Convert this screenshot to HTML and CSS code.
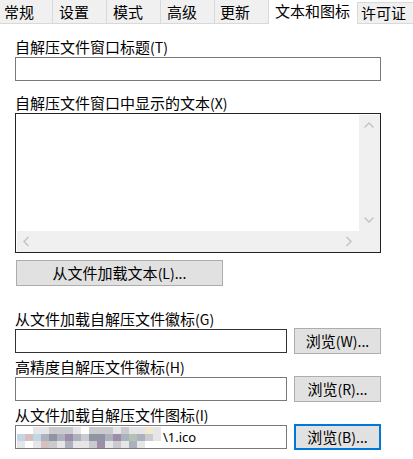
FILE: index.html
```html
<!DOCTYPE html>
<html lang="zh-CN">
<head>
<meta charset="utf-8">
<title>文本和图标</title>
<link rel="stylesheet" href="styles.css">
</head>
<body>
<div class="tabs">
  <div class="tab p4">常规</div>
  <div class="tab">设置</div>
  <div class="tab">模式</div>
  <div class="tab">高级</div>
  <div class="tab p5">更新</div>
  <div class="tab sel">文本和图标</div>
  <div class="tab last">许可证</div>
</div>
<div class="content">
  <div class="label first">自解压文件窗口标题<span class="key">(T)</span></div>
  <div class="input wide"></div>

  <div class="label l2">自解压文件窗口中显示的文本<span class="key">(X)</span></div>
  <div class="memo">
    <div class="memo-text"></div>
    <div class="vscroll">
      <svg width="21" height="116" viewBox="0 0 21 116"><polyline points="5.5,12.5 10,8 14.5,12.5" /><polyline points="5.5,102.5 10,107 14.5,102.5" /></svg>
    </div>
    <div class="hscroll">
      <svg width="342" height="21" viewBox="0 0 342 21"><polyline points="11.5,6 7,10.5 11.5,15" /><polyline points="329.5,6 334,10.5 329.5,15" /></svg>
    </div>
    <div class="corner"></div>
  </div>

  <button class="btn load">从文件加载文本<span class="key">(L)...</span></button>

  <div class="label lg">从文件加载自解压文件徽标<span class="key">(G)</span></div>
  <div class="row">
    <div class="input narrow dark"></div>
    <button class="btn browse">浏览<span class="key">(W)...</span></button>
  </div>

  <div class="label lh">高精度自解压文件徽标<span class="key">(H)</span></div>
  <div class="row">
    <div class="input narrow"></div>
    <button class="btn browse">浏览<span class="key">(R)...</span></button>
  </div>

  <div class="label lh">从文件加载自解压文件图标<span class="key">(I)</span></div>
  <div class="row">
    <div class="input narrow path">
      <div class="mosaic">
        <span></span><span></span><span class="a"></span><span class="a"></span><span class="b"></span><span class="b"></span><span class="b"></span><span class="a"></span><span></span><span class="b"></span><span class="b"></span><span class="b"></span><span class="a"></span><span class="b"></span><span class="a"></span><span class="a"></span><span class="i"></span><span class="a"></span>
        <span class="f"></span><span class="e"></span><span class="f"></span><span class="c"></span><span class="d"></span><span class="c"></span><span class="g"></span><span class="c"></span><span class="b"></span><span class="d"></span><span class="d"></span><span class="c"></span><span class="g"></span><span class="c"></span><span class="h"></span><span class="c"></span><span class="b"></span><span class="a"></span>
        <span class="a"></span><span></span><span class="a"></span><span class="e"></span><span class="b"></span><span class="a"></span><span class="c"></span><span class="a"></span><span class="a"></span><span class="b"></span><span class="g"></span><span class="a"></span><span class="b"></span><span class="a"></span><span class="c"></span><span class="a"></span><span></span><span></span>
      </div>
      <span class="file">\1.ico</span>
    </div>
    <button class="btn browse focus">浏览<span class="key">(B)...</span></button>
  </div>
</div>
</body>
</html>
```

FILE: styles.css
```css
html, body {
  margin: 0;
  padding: 0;
  background: #ffffff;
}

body {
  width: 413px;
  height: 459px;
  overflow: hidden;
  font-family: "Noto Sans CJK SC", "Noto Sans", sans-serif;
  font-size: 15px;
  color: #000000;
}

/* Tabs */
.tabs {
  display: flex;
  height: 24px;
}

.tab {
  box-sizing: border-box;
  width: 54px;
  height: 24px;
  padding: 1px 0 0 6px;
  line-height: 22px;
  background: #f0f0f0;
  border-right: 1px solid #d9d9d9;
  border-bottom: 1px solid #d9d9d9;
  white-space: nowrap;
}

.tab.p4 {
  width: 53px;
  padding-left: 4px;
}

.tab.p5 {
  padding-left: 5px;
}

.tab.sel {
  width: 88px;
  background: #ffffff;
  border: none;
  padding: 0 0 0 6px;
  line-height: 21px;
}

.tab.last {
  flex: 1;
  height: 22px;
  margin-top: 2px;
  padding: 0 0 0 3px;
  line-height: 20px;
  border-right: none;
  border-left: 1px solid #d9d9d9;
  border-top: 1px solid #d9d9d9;
}

/* Content */
.content {
  padding: 13px 0 0 15px;
}

.label {
  height: 20px;
  line-height: 20px;
  white-space: nowrap;
}

.label.l2 {
  margin-top: 12px;
}

.label.lg {
  margin-top: 23px;
}

.label.lh {
  margin-top: 4px;
}

.key {
  font-size: 14px;
}

.input {
  box-sizing: border-box;
  height: 24px;
  border: 1px solid #7a7a7a;
  background: #ffffff;
}

.input.wide {
  width: 366px;
}

.input.narrow {
  width: 272px;
}

.input.dark {
  border-color: #333333;
}

/* Multi-line text box */
.memo {
  box-sizing: border-box;
  width: 366px;
  height: 140px;
  border: 1px solid #222222;
  padding: 1px 0 0 1px;
  display: grid;
  grid-template-columns: 1fr 21px;
  grid-template-rows: 1fr 21px;
  background: #ffffff;
}

.memo-text {
  background: #ffffff;
}

.vscroll,
.hscroll,
.corner {
  background: #f0f0f0;
}

.vscroll svg,
.hscroll svg {
  display: block;
}

.vscroll polyline,
.hscroll polyline {
  fill: none;
  stroke: #c2c2c2;
  stroke-width: 1.4;
}

/* Buttons */
.btn {
  box-sizing: border-box;
  height: 26px;
  padding: 0;
  background: #e1e1e1;
  border: 1px solid #adadad;
  font-family: "Noto Sans CJK SC", "Noto Sans", sans-serif;
  font-size: 15px;
  line-height: 22px;
  color: #000000;
  text-align: center;
  white-space: nowrap;
}

.btn.load {
  display: block;
  width: 207px;
  margin: 7px 0 0 1px;
}

.row {
  display: flex;
  align-items: center;
  height: 24px;
}

.btn.browse {
  width: 87px;
  margin: -1px 0 -1px 7px;
}

.btn.focus {
  border: 2px solid #0078d7;
}

/* Path field with pixelated content */
.input.path {
  display: flex;
  align-items: center;
  padding-left: 1px;
  overflow: hidden;
}

.mosaic {
  display: grid;
  grid-template-columns: repeat(18, 8px);
  grid-template-rows: repeat(3, 7px);
  width: 146px;
  flex: none;
}

.mosaic span {
  display: block;
}

.mosaic .a { background: #e6e6e8; }
.mosaic .b { background: #cbcbcf; }
.mosaic .c { background: #acb2bd; }
.mosaic .d { background: #8f95a1; }
.mosaic .e { background: #d6bfbf; }
.mosaic .f { background: #c2d6e6; }
.mosaic .g { background: #9e8da9; }
.mosaic .h { background: #b3c2b3; }
.mosaic .i { background: #f3e9cf; }

.file {
  font-family: "Noto Sans", sans-serif;
  font-size: 13px;
  line-height: 20px;
  white-space: nowrap;
}
```
